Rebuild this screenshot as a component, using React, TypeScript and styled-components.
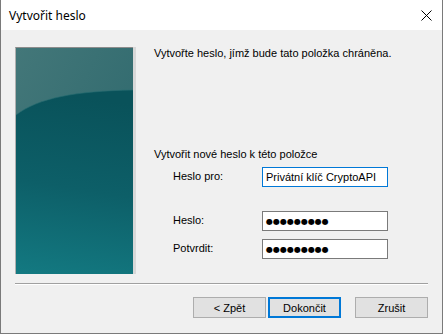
import React from 'react'
import styled, { createGlobalStyle } from 'styled-components'

const GlobalStyle = createGlobalStyle`
  html, body {
    margin: 0;
    padding: 0;
    background: #ffffff;
  }
  body {
    font-family: 'Liberation Sans', Arial, sans-serif;
    font-size: 11px;
    color: #000000;
  }
`

const Window = styled.div`
  width: 443px;
  height: 334px;
  box-sizing: border-box;
  border: 1px solid #7a7a7a;
  border-top: none;
  display: flex;
  flex-direction: column;
  background: #f0f0f0;
`

const TitleBar = styled.div`
  height: 30px;
  flex: none;
  background: #ffffff;
  display: flex;
  align-items: center;
  justify-content: space-between;
  padding: 0 10px 0 8px;
`

const Title = styled.span`
  font-family: 'Noto Sans', 'Open Sans', sans-serif;
  font-size: 12px;
  color: #000000;
`

const CloseButton = styled.div`
  width: 12px;
  height: 12px;
  display: flex;
  align-items: center;
  justify-content: center;
`

const Body = styled.div`
  flex: 1;
  display: flex;
  flex-direction: column;
  padding: 17px 14px 0 14px;
`

const Content = styled.div`
  display: flex;
  height: 226px;
`

const SidePanel = styled.div`
  width: 117px;
  height: 226px;
  flex: none;
  box-shadow: 3px 0 0 #d8d8d8;
  border-top: 1px solid #8c8c8c;
  border-left: 1px solid #b0b0b0;
  line-height: 0;
`

const Main = styled.div`
  flex: 1;
  display: flex;
  flex-direction: column;
  padding-left: 21px;
`

const Intro = styled.p`
  margin: 0;
  line-height: 13px;
`

const SectionLabel = styled.p`
  margin: 88px 0 0 0;
  line-height: 13px;
`

const FormGrid = styled.div`
  display: grid;
  grid-template-columns: 89px 126px;
  grid-template-rows: 20px 8px 20px 20px;
  margin: 6px 0 0 19px;
  row-gap: 8px;
  align-items: center;
`

const Label = styled.span<{ $row: number }>`
  grid-row: ${({ $row }) => $row};
  grid-column: 1;
  line-height: 13px;
  margin-top: -2px;
`

const Field = styled.div<{ $focused?: boolean; $row: number }>`
  grid-row: ${({ $row }) => $row};
  grid-column: 2;
  height: 20px;
  box-sizing: border-box;
  border: 1px solid ${({ $focused }) => ($focused ? '#0078d7' : '#7a7a7a')};
  background: #ffffff;
  display: flex;
  align-items: center;
  padding: 0 3px;
  font-size: 11px;
  white-space: nowrap;
  overflow: hidden;
`

const Dots = styled.span`
  font-family: 'DejaVu Sans', sans-serif;
  font-size: 8px;
  letter-spacing: 0;
  padding-top: 1px;
`

const Separator = styled.div`
  height: 1px;
  background: #a0a0a0;
  margin-top: 10px;
  box-shadow: 0 1px 0 #ffffff;
`

const ButtonRow = styled.div`
  display: flex;
  justify-content: flex-end;
  margin-top: 13px;
`

const Button = styled.div<{ $primary?: boolean; $spaced?: boolean }>`
  width: 73px;
  height: 21px;
  box-sizing: border-box;
  background: #e1e1e1;
  border: ${({ $primary }) => ($primary ? '2px solid #0078d7' : '1px solid #adadad')};
  display: flex;
  align-items: center;
  justify-content: center;
  margin-left: ${({ $spaced }) => ($spaced ? 14 : 2)}px;
  font-size: 11px;
`

const PanelArt = () => (
  <svg width="117" height="226" viewBox="0 0 117 226">
    <defs>
      <linearGradient id="top" x1="0" y1="0" x2="1" y2="1">
        <stop offset="0" stopColor="#437779" />
        <stop offset="1" stopColor="#2a666b" />
      </linearGradient>
      <linearGradient id="deep" x1="0.2" y1="0" x2="0.1" y2="1">
        <stop offset="0" stopColor="#09525a" />
        <stop offset="0.5" stopColor="#0d5f68" />
        <stop offset="1" stopColor="#137981" />
      </linearGradient>
    </defs>
    <rect width="117" height="226" fill="url(#top)" />
    <path d="M0 67 C 22 50, 60 43, 117 42 L117 226 L0 226 Z" fill="url(#deep)" />
    <path d="M0 67 C 22 50, 60 43, 117 42" fill="none" stroke="#276c72" strokeWidth="1" opacity="0.6" />
  </svg>
)

export default function App() {
  return (
    <>
      <GlobalStyle />
      <Window>
        <TitleBar>
          <Title>Vytvořit heslo</Title>
          <CloseButton>
            <svg width="11" height="11" viewBox="0 0 11 11">
              <path d="M0.5 0.5 L10.5 10.5 M10.5 0.5 L0.5 10.5" stroke="#000" strokeWidth="1" />
            </svg>
          </CloseButton>
        </TitleBar>
        <Body>
          <Content>
            <SidePanel>
              <PanelArt />
            </SidePanel>
            <Main>
              <Intro>Vytvořte heslo, jímž bude tato položka chráněna.</Intro>
              <SectionLabel>Vytvořit nové heslo k této položce</SectionLabel>
              <FormGrid>
                <Label $row={1}>Heslo pro:</Label>
                <Field $row={1} $focused>Privátní klíč CryptoAPI</Field>
                <Label $row={3}>Heslo:</Label>
                <Field $row={3}>
                  <Dots>●●●●●●●●●</Dots>
                </Field>
                <Label $row={4}>Potvrdit:</Label>
                <Field $row={4}>
                  <Dots>●●●●●●●●●</Dots>
                </Field>
              </FormGrid>
            </Main>
          </Content>
          <Separator />
          <ButtonRow>
            <Button>&lt; Zpět</Button>
            <Button $primary>Dokončit</Button>
            <Button $spaced>Zrušit</Button>
          </ButtonRow>
        </Body>
      </Window>
    </>
  )
}
